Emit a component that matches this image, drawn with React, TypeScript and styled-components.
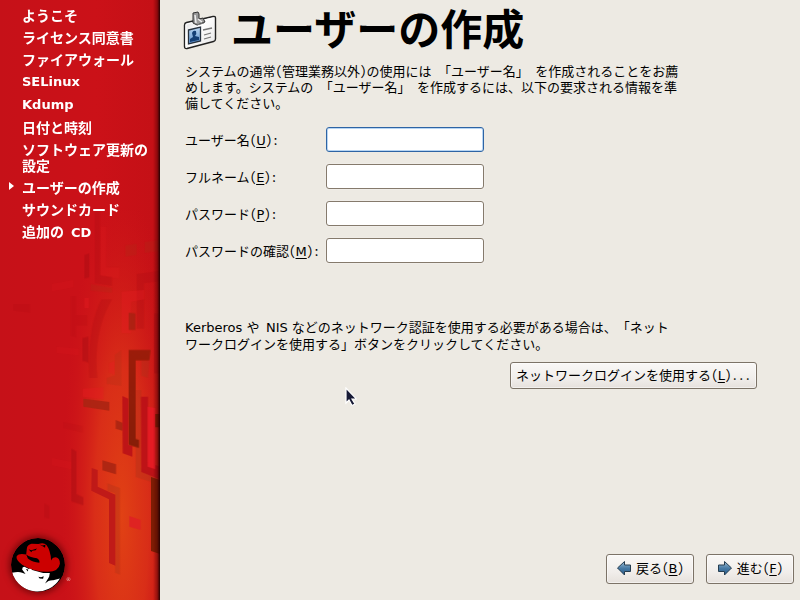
import React from "react";
import styled, { createGlobalStyle, css } from "styled-components";

const GlobalStyle = createGlobalStyle`
  *, *::before, *::after { box-sizing: border-box; }
  body {
    margin: 0;
    background: #edeae3;
    color: #000;
    font-family: "Noto Sans CJK JP", "Noto Sans", sans-serif;
    font-size: 13px;
    line-height: 16px;
    font-feature-settings: "hwid";
  }
`;

const Page = styled.div`
  position: relative;
  display: grid;
  grid-template-columns: 160px minmax(0, 1fr);
  min-height: 100vh;
`;

const Sidebar = styled.aside`
  position: relative;
  display: flex;
  flex-direction: column;
  justify-content: space-between;
  overflow: hidden;
  background: linear-gradient(90deg, #c61118, #cb1118 60%, #c41016);
`;

const Artwork = styled.svg`
  position: absolute;
  right: 0;
  bottom: 0;
  width: 160px;
  height: 390px;
`;

const EdgeShade = styled.div`
  position: absolute;
  inset: 0 0 0 auto;
  width: 7px;
  background: linear-gradient(90deg, rgba(60, 0, 0, 0), rgba(60, 0, 0, 0.4) 60%, #240203);
`;

const Steps = styled.ol`
  position: relative;
  display: flex;
  flex-direction: column;
  gap: 6px;
  margin: 0;
  padding: 7px 8px 0 22px;
  list-style: none;
  color: #fff;
  font-size: 14px;
  font-weight: 700;
`;

const Step = styled.li<{ $latin?: boolean; $current?: boolean }>`
  position: relative;
  ${(p) =>
    p.$latin &&
    css`
      font-family: "DejaVu Sans", sans-serif;
      font-size: 13px;
      line-height: 17px;
    `}
  ${(p) =>
    p.$current &&
    css`
      &::before {
        content: "";
        position: absolute;
        left: -13px;
        top: 3px;
        border: 4px solid transparent;
        border-left: 5px solid #fff;
        border-right: 0;
      }
    `}
`;

const Latin = styled.span`
  font-family: "DejaVu Sans", sans-serif;
  font-size: 13px;
  line-height: 1;
`;

const Brand = styled.div`
  position: relative;
  display: flex;
  align-items: center;
  padding: 0 0 8px 11px;
`;

const Logo = styled.svg`
  width: 54px;
  height: 54px;
  border-radius: 50%;
  box-shadow: 0 0 6px 2px rgba(70, 0, 0, 0.6);
`;

const Registered = styled.span`
  margin-top: 28px;
  padding-left: 1px;
  color: #f3c4bd;
  font-family: "DejaVu Sans", sans-serif;
  font-size: 5px;
  line-height: 6px;
`;

const Main = styled.main`
  display: flex;
  flex-direction: column;
  padding: 0 6px 16px 25px;
`;

const Header = styled.header`
  display: flex;
  align-items: flex-start;
  gap: 14px;
  height: 63px;
`;

const BadgeIcon = styled.svg`
  flex: none;
  width: 34px;
  height: 40px;
  margin: 10px 0 0 -2px;
`;

const Title = styled.h1`
  margin: 0;
  font-size: 42px;
  line-height: 54px;
  font-weight: 700;
`;

const Text = styled.p<{ $loose?: boolean }>`
  margin: 0;
  line-height: ${(p) => (p.$loose ? 17 : 16)}px;
  white-space: pre-wrap;
`;

const Form = styled.form`
  display: grid;
  grid-template-columns: 141px 158px;
  grid-auto-rows: 25px;
  row-gap: 12px;
  align-items: center;
  margin: 16px 0 55px;
`;

const Label = styled.label`
  white-space: nowrap;
`;

const Field = styled.input`
  width: 100%;
  height: 25px;
  padding: 2px 5px;
  border: 1px solid #857a6c;
  border-radius: 3px;
  background: #fff;
  font: inherit;
  box-shadow: 0 0 0 1px #f0ede8;
  &:focus {
    outline: none;
    border-color: #2e64a4;
    box-shadow: inset 0 0 0 1px #b7d5f3;
  }
`;

const Mnemonic = styled.span`
  font-family: "DejaVu Sans", sans-serif;
  text-decoration: underline;
  text-underline-offset: 2px;
  line-height: 1;
`;

const Button = styled.button<{ $nav?: boolean }>`
  display: inline-flex;
  align-items: center;
  justify-content: center;
  height: ${(p) => (p.$nav ? 30 : 27)}px;
  min-width: ${(p) => (p.$nav ? 88 : 247)}px;
  padding: 0 4px 2px;
  border: 1px solid #7c7367;
  border-radius: 3px;
  background: linear-gradient(#f9f8f6, #f1eeeb 60%, #e6e1dc);
  box-shadow: inset 0 0 0 1px rgba(255, 255, 255, 0.5);
  color: #000;
  font: inherit;
  font-feature-settings: inherit;
  white-space: nowrap;
`;

const NetworkRow = styled.div`
  display: flex;
  justify-content: flex-end;
  margin-top: 10px;
  padding-right: 37px;
`;

const Footer = styled.footer`
  display: flex;
  justify-content: flex-end;
  gap: 12px;
  margin-top: auto;
`;

const ArrowIcon = styled.svg`
  width: 16px;
  height: 16px;
  margin-right: 4px;
`;

const Pointer = styled.svg`
  position: absolute;
  left: 345px;
  top: 387px;
  width: 12px;
  height: 20px;
  pointer-events: none;
`;

const SidebarArt = () => (
  <Artwork viewBox="0 0 480 1170" aria-hidden="true">
    <defs>
      <radialGradient id="glow" cx="0.5" cy="0.5" r="0.5">
        <stop offset="0" stopColor="#e24414" stopOpacity="0.95" />
        <stop offset="0.45" stopColor="#dd3518" stopOpacity="0.8" />
        <stop offset="1" stopColor="#cf1518" stopOpacity="0" />
      </radialGradient>
      <linearGradient id="fade" x1="0" x2="0" y1="0" y2="1">
        <stop offset="0" stopColor="#9c1c0a" />
        <stop offset="1" stopColor="#861e08" />
      </linearGradient>
    </defs>
    <ellipse cx="365" cy="920" rx="180" ry="980" fill="url(#glow)" />
    <g fill="#a50c12" opacity="0.22">
      <path d="M284 0h16v195l36 6v27l-52-8zM410 192l70-10v32l-48 6v136h-22z" />
      <path d="M304 268h32q-58 100-44 236h-24q-8-150 36-236z" />
      <path d="M40 282h50v26l-50-6zM212 258h16v124l-16-4zM228 315h34v32h-34z" opacity="0.6" />
      <path d="M133 880l15 8v38l-15-4z" />
      <path d="M190 636l58 12v20l-58-14z" opacity="0.5" />
    </g>
    <path
      d="M253 135l15-5v72l-15 3zM247 384l18-4v78l-18-6zM214 716l15 8v128l21 10v24l-36-12z"
      fill="#a50c12"
      opacity="0.42"
    />
    <g fill="#e51d22" opacity="0.4">
      <path d="M302 50h16v122h40v34l-56-8z" opacity="0.5" />
      <path d="M365 245l68-5v28l-40 7v95h-28z" opacity="0.9" />
      <path d="M156 222l64-12v22l-64 12zM170 410l66 6v20l-66-7z" opacity="0.4" />
      <path d="M253 264h14v30h-14zM248 536l62-4v36l-62-8zM328 460l16-8v42l-16-6z" />
      <path d="M156 744l58 12v22l-58-12z" opacity="0.4" />
    </g>
    <g fill="#a8331a" opacity="0.32">
      <path d="M376 106l34-5v34l-34 5zM434 96l46-7v34l-46 6zM272 222l64 12v14l-64-6z" opacity="0.7" />
      <path d="M320 504l24-8v-62l20-14v108l-44-6z" opacity="0.7" />
      <path d="M424 452h24l-4 52-20-7zM407 540h17v235l50 20v28l-67-22zM322 820l38 14v260l-15-6V850l-23-8z" />
    </g>
    <path d="M386 308l20 2v50h-20z" fill="#a52212" opacity="0.8" />
    <path d="M386 420h66l-4 31h-41v236l10 3v24l-31-9z" fill="url(#fade)" />
    <path d="M250 566l78 10v26l-78-12zM347 630l20 8v24l-20-6zM307 751l41 12v30l-41-12z" fill="#a82412" opacity="0.88" />
    <path d="M367 558l18 8v139l12 4v31l-29-10zM423 560h21v196l36 14v38l-56-22z" fill="#b80e18" opacity="0.85" />
    <path d="M443 590l23 4v184l-23-8z" fill="#e41b23" />
    <path d="M388 918l34 12v30l-34-10z" fill="#df2123" opacity="0.9" />
    <path d="M453 801l27 9v222l-27-9zM466 612h14v40h-14z" fill="#7e1c04" />
    <path d="M275 774l18 6v50l53 24v213l-19-8V868l-53-26z" fill="#bd1718" opacity="0.9" />
    <path d="M462 310h18v180h-18z" fill="#a90c14" opacity="0.4" />
  </Artwork>
);

const Shadowman = () => (
  <Logo viewBox="35 417 160 160" role="img" aria-label="Red Hat">
    <circle cx="115" cy="497" r="80" fill="#000" />
    <path
      fill="#fff"
      d="M38 520Q58 516 68 520L78 524 68 510Q68 501 75 502L88 509Q92 503 98 512L130 521 150 521 148 532 136 552Q146 541 160 542L180 537A78 78 0 0 1 38 520z"
    />
    <path fill="#000" d="M116 532l8 1 8-3-2 8-10-1zM79 509l6 7 1-6z" />
    <path
      fill="#c00"
      d="M80 466L82 448Q83 437 96 434L116 435Q132 429 140 438 152 453 154 484 157 474 168 474 180 477 180 493 176 516 145 517 103 518 68 496 48 481 52 470 58 462 80 466z"
    />
    <path
      fill="#000"
      d="M80 466Q93 476 112 477 121 483 119 490 99 490 85 478zM87 450l8 3 17-5-4 5-10 2-3 4zM119 436l10 3 8-2-1 9-6-4z"
    />
  </Logo>
);

const IdBadge = () => (
  <BadgeIcon viewBox="0 0 34 40" aria-hidden="true">
    <defs>
      <linearGradient id="photo" x1="0" x2="0" y1="0" y2="1">
        <stop offset="0" stopColor="#b8d4f0" />
        <stop offset="1" stopColor="#5f94cf" />
      </linearGradient>
      <linearGradient id="card" x1="0" x2="1" y1="0" y2="1">
        <stop offset="0" stopColor="#d4d4d4" />
        <stop offset="0.4" stopColor="#fff" />
        <stop offset="1" stopColor="#e5e5e5" />
      </linearGradient>
    </defs>
    <path
      d="M1.5 15Q1.500 13 3.500 12.500L30 6.500Q32.500 6 32.500 8V29Q32.500 31 30.500 31.500L4 38.500Q1.500 39 1.500 36.500z"
      fill="url(#card)"
      stroke="#222"
      strokeWidth="1.400"
    />
    <path d="M3 36V15Q3 14 4 14L30 8" fill="none" stroke="#fff" />
    <path d="M10 3l5-1 1 2v5l4-1 2 4-8 3-4-2z" fill="#999" stroke="#333" />
    <path d="M12 5l1 8M15 9l4 3" stroke="#eee" strokeWidth="1.500" />
    <path d="M14 15l7-2" stroke="#777" />
    <path d="M5.500 20l12-3v14l-12 3z" fill="url(#photo)" stroke="#26313e" strokeWidth="1.300" />
    <path d="M7 32v-3l3-2-1-4q1-3 4-2 1 3-1 5l4 1v3z" fill="#143f75" />
    <path d="M20 20l9-2M21 25l7-2M21 29l7-2" stroke="#777" strokeWidth="1.300" />
  </BadgeIcon>
);

const Arrow = ({ back }: { back?: boolean }) => (
  <ArrowIcon viewBox="0 0 16 16" aria-hidden="true">
    <defs>
      <linearGradient id={back ? "arrowBack" : "arrowNext"} x1="0" x2="0" y1="0" y2="1">
        <stop offset="0" stopColor="#9cbdd6" />
        <stop offset="0.5" stopColor="#487ba5" />
        <stop offset="1" stopColor="#285b8c" />
      </linearGradient>
    </defs>
    <path
      d={back ? "M1.5 8L8.500 1.500V5H14.500V11.500H8.500V15z" : "M14.500 8L7.500 1.500V5H1.500V11.500H7.500V15z"}
      fill={back ? "url(#arrowBack)" : "url(#arrowNext)"}
      stroke="#263d50"
      strokeLinejoin="round"
    />
  </ArrowIcon>
);

const fields = [
  { id: "username", text: "ユーザー名", accessKey: "U", type: "text" },
  { id: "fullname", text: "フルネーム", accessKey: "E", type: "text" },
  { id: "password", text: "パスワード", accessKey: "P", type: "password" },
  { id: "confirm", text: "パスワードの確認", accessKey: "M", type: "password" },
];

const Key = ({ letter }: { letter: string }) => (
  <span>
    (<Mnemonic>{letter}</Mnemonic>)
  </span>
);

export default function App() {
  return (
    <>
      <GlobalStyle />
      <Page>
        <Sidebar>
          <SidebarArt />
          <EdgeShade />
          <Steps>
            <Step>ようこそ</Step>
            <Step>ライセンス同意書</Step>
            <Step>ファイアウォール</Step>
            <Step $latin>SELinux</Step>
            <Step $latin>Kdump</Step>
            <Step>日付と時刻</Step>
            <Step>ソフトウェア更新の設定</Step>
            <Step $current aria-current="step">ユーザーの作成</Step>
            <Step>サウンドカード</Step>
            <Step>
              追加の <Latin>CD</Latin>
            </Step>
          </Steps>
          <Brand>
            <Shadowman />
            <Registered>®</Registered>
          </Brand>
        </Sidebar>
        <Main>
          <Header>
            <IdBadge />
            <Title>ユーザーの作成</Title>
          </Header>
          <Text>
            システムの通常(管理業務以外)の使用には 「ユーザー名」 を作成されることをお薦
            <br />
            めします。システムの 「ユーザー名」 を作成するには、以下の要求される情報を準
            <br />
            備してください。
          </Text>
          <Form onSubmit={(e) => e.preventDefault()}>
            {fields.map((f, i) => (
              <React.Fragment key={f.id}>
                <Label htmlFor={f.id}>
                  {f.text}
                  <Key letter={f.accessKey} />:
                </Label>
                <Field id={f.id} type={f.type} autoFocus={i === 0} />
              </React.Fragment>
            ))}
          </Form>
          <Text $loose>
            <Latin>Kerberos </Latin>や <Latin>NIS </Latin>などのネットワーク認証を使用する必要がある場合は、「ネット
            <br />
            ワークログインを使用する」ボタンをクリックしてください。
          </Text>
          <NetworkRow>
            <Button type="button">
              ネットワークログインを使用する
              <Key letter="L" />
              ...
            </Button>
          </NetworkRow>
          <Footer>
            <Button $nav type="button">
              <Arrow back />
              戻る
              <Key letter="B" />
            </Button>
            <Button $nav type="button">
              <Arrow />
              進む
              <Key letter="F" />
            </Button>
          </Footer>
        </Main>
        <Pointer viewBox="0 0 12 20" aria-hidden="true">
          <path d="M1 1V16L4 13 7 18.500 10 17 7 12H11.500z" fill="#171a35" stroke="#fff" strokeWidth="1.200" />
        </Pointer>
      </Page>
    </>
  );
}
